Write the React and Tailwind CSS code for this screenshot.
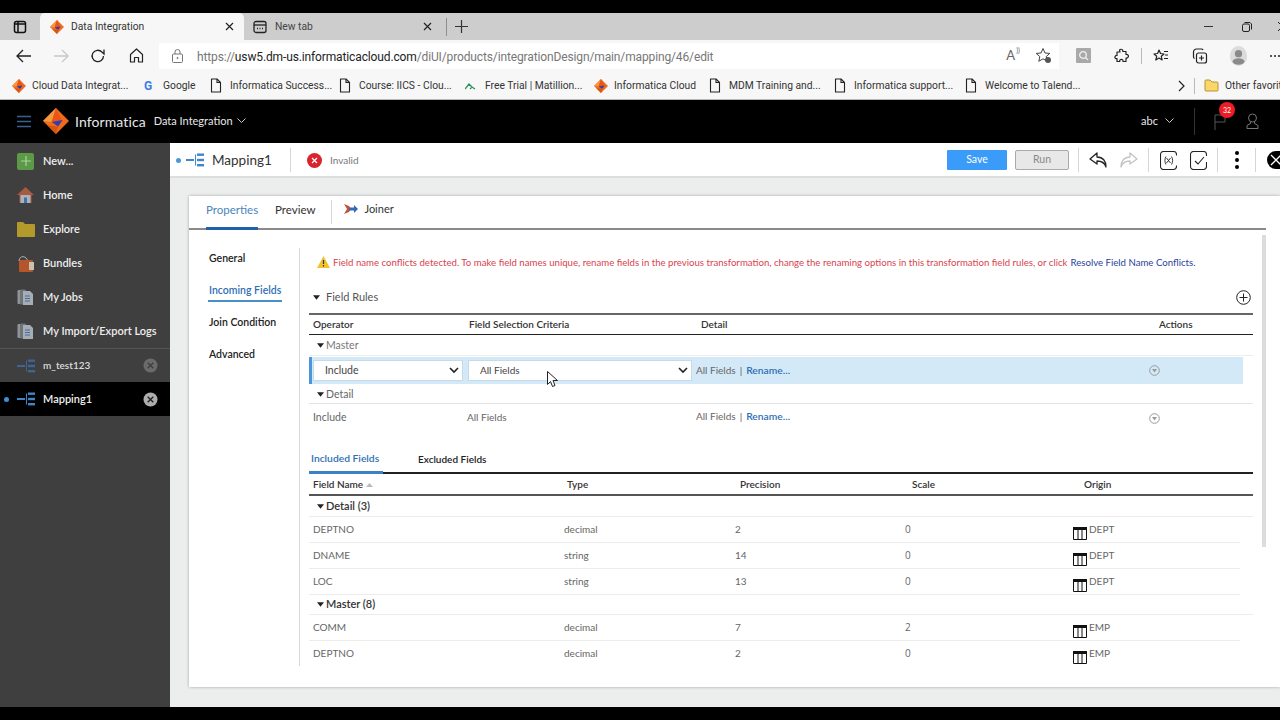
import React from "react";

const Logo = ({ s = 14 }) => (
  <svg width={s} height={s} viewBox="0 0 24 24" className="shrink-0">
    <path d="M12 0 L24 12 L12 24 L0 12Z" fill="#f26a1b" />
    <path d="M12 0 L0 12 L8 13Z" fill="#f59a3a" />
    <path d="M12 0 L18 13 L8 13Z" fill="#e8541a" />
    <path d="M8 13 L18 11 L14 17Z" fill="#2f3fb0" />
    <path d="M12 24 L4 16 L14 17Z" fill="#d9540f" />
  </svg>
);
const FileIco = () => (
  <svg width="12" height="15" viewBox="0 0 12 15" fill="none" stroke="#222" strokeWidth="1.1" className="shrink-0">
    <path d="M1.5 1h5.500l3.500 3.500v9.500h-9z" strokeLinejoin="round" /><path d="M7 1v3.500h3.500" />
  </svg>
);
const Bm = ({ icon, x, children }) => (
  <div className={`flex items-center shrink-0 ${x}`}>
    <div className="w-[20px] flex items-center shrink-0">{icon}</div>
    <span className="text-[10.300px] text-[#333] whitespace-nowrap">{children}</span>
  </div>
);
const MapIco = ({ c = "#3f86c8" }) => (
  <svg width="18" height="14" viewBox="0 0 18 14" className="shrink-0">
    <rect x="0" y="6" width="8" height="2" fill={c} />
    <rect x="11" y="0.5" width="7" height="2.4" fill={c} />
    <rect x="11" y="5.8" width="7" height="2.4" fill={c} />
    <rect x="11" y="11" width="7" height="2.4" fill={c} />
    <path d="M9.500 1.500v11" stroke={c} strokeWidth="1" />
  </svg>
);
const DocsIco = () => (
  <svg width="17" height="17" viewBox="0 0 17 17" className="shrink-0">
    <rect x="0.5" y="1" width="6" height="14" rx="1" fill="#8f9499" />
    <rect x="3" y="0.5" width="6" height="15" rx="1" fill="#6f7479" />
    <path d="M6 2h7l3 3v11H6z" fill="#a7adb3" />
    <path d="M8 7h5M8 9.500h5M8 12h5" stroke="#3f6ea0" strokeWidth="1.2" />
  </svg>
);
const NavItem = ({ icon, label }) => (
  <div className="h-[34px] shrink-0 flex items-center pl-[17px]">
    <div className="w-[26px] flex items-center">{icon}</div>
    <span className="text-[11px] font-semibold text-[#eeeeee] whitespace-nowrap">{label}</span>
  </div>
);
const Circle = ({ active }) => (
  <svg width="15" height="15" viewBox="0 0 15 15" className="shrink-0">
    <circle cx="7.500" cy="7.500" r="7" fill={active ? "#adadad" : "#6b6b6b"} />
    <path d="M4.700 4.700l5.600 5.600M10.300 4.700l-5.600 5.600" stroke={active ? "#222" : "#3f3f3f"} strokeWidth="1.400" />
  </svg>
);
const Sep = ({ x = "" }) => <div className={`w-px h-[24px] bg-[#d6d6d6] shrink-0 ${x}`} />;
const Tri = ({ c = "#222", cls = "" }) => (
  <svg width="7" height="5" viewBox="0 0 8 5" className={`shrink-0 ${cls}`}><path d="M0 0h8L4 5z" fill={c} /></svg>
);
const Chev = () => (
  <svg width="10" height="7" viewBox="0 0 10 7" fill="none" stroke="#222" strokeWidth="1.600" className="shrink-0"><path d="M1 1l4 4 4-4" /></svg>
);
const Action = () => (
  <svg width="11" height="11" viewBox="0 0 11 11" className="shrink-0">
    <circle cx="5.500" cy="5.500" r="4.800" fill="none" stroke="#9a9a9a" />
    <path d="M3 4h5L5.500 7.500z" fill="#9a9a9a" />
  </svg>
);
const TableIco = () => (
  <svg width="14" height="13" viewBox="0 0 14 13" className="shrink-0 mt-[8px]">
    <rect x="0" y="0" width="14" height="3" fill="#111" />
    <path d="M.5 3v9.500h13V3M5 3v9.500M9 3v9.500" fill="none" stroke="#111" />
  </svg>
);
const Rename = () => (
  <>
    <span className="text-[#666]">All Fields</span>
    <span className="text-[#555] mx-[4px]">|</span>
    <span className="text-[#2f6fb5] font-semibold text-[10.300px]">Rename...</span>
  </>
);
const Field = ({ name, type, p, s, o }) => (
  <div className="flex items-center h-[26px] shrink-0 border-b border-[#ececec] w-[931px] text-[10px] text-[#666]">
    <span className="w-[255px] pl-[4px]">{name}</span>
    <span className="w-[171px]">{type}</span>
    <span className="w-[170px]">{p}</span>
    <span className="w-[168px] font-['Open_Sans',sans-serif] text-[#666]">{s}</span>
    <div className="flex items-center gap-[2px]"><TableIco /><span>{o}</span></div>
  </div>
);
const Group = ({ cls = "", children }) => (
  <div className={`flex items-center h-[21px] shrink-0 border-b border-[#ececec] pl-[8px] gap-[2px] text-[11px] font-semibold text-[#333] ${cls}`}>
    <Tri />{children}
  </div>
);

export default function App() {
  return (
    <div className="w-[1280px] h-[720px] overflow-hidden bg-black flex flex-col font-['Lato',sans-serif] antialiased relative">
      <div className="h-[13px] shrink-0 bg-black" />
      {/* tab strip */}
      <div className="h-[27px] shrink-0 bg-[#cdcdcd] flex items-end font-['Roboto',sans-serif]">
        <div className="w-[40px] h-full flex items-center justify-center">
          <svg width="14" height="14" viewBox="0 0 14 14" fill="none" stroke="#111" strokeWidth="1.500"><rect x="1.500" y="1.500" width="11" height="11" rx="2" /><path d="M5 2v10M2 4h10" /></svg>
        </div>
        <div className="w-[204px] h-full bg-[#f7f7f7] rounded-t-[5px] flex items-center pl-[10px] pr-[10px]">
          <Logo />
          <span className="ml-[7px] pt-[1px] text-[10.300px] text-[#333] flex-1">Data Integration</span>
          <svg width="9" height="9" viewBox="0 0 9 9" stroke="#222" strokeWidth="1.200"><path d="M1 1l7 7M8 1l-7 7" /></svg>
        </div>
        <div className="w-[196px] h-full flex items-center pl-[9px] pr-[8px]">
          <svg width="14" height="14" viewBox="0 0 14 14" fill="none" stroke="#222" strokeWidth="1.300"><rect x="1" y="1.500" width="12" height="11" rx="2" /><path d="M1 5h12" /><path d="M4 8.500h1M6.500 8.500h1M9 8.500h1" /></svg>
          <span className="ml-[8px] pt-[1px] text-[10.300px] text-[#444] flex-1">New tab</span>
          <svg width="9" height="9" viewBox="0 0 9 9" stroke="#222" strokeWidth="1.200"><path d="M1 1l7 7M8 1l-7 7" /></svg>
        </div>
        <div className="w-px h-[18px] bg-[#8e8e8e] mb-[4px] ml-[6px]" />
        <div className="h-full flex items-center ml-[8px]">
          <svg width="13" height="13" viewBox="0 0 13 13" stroke="#333" strokeWidth="1.200"><path d="M6.500 0v13M0 6.500h13" /></svg>
        </div>
        <div className="flex-1" />
        <div className="h-full flex items-center">
          <div className="w-[9px] h-px bg-[#333]" />
          <svg width="10" height="10" viewBox="0 0 10 10" fill="none" stroke="#222" className="ml-[29px]"><rect x=".5" y="2" width="7" height="7.500" rx="1.500" /><path d="M2.500.5h5.500l1.500 1.500v5.500" /></svg>
          <svg width="9" height="9" viewBox="0 0 9 9" stroke="#222" className="ml-[26px] -mr-[7px]"><path d="M0 0l9 9M9 0L0 9" /></svg>
        </div>
      </div>
      {/* address bar */}
      <div className="h-[31px] shrink-0 bg-[#f7f7f7] flex items-center">
        <div className="w-[160px] flex items-center pl-[16px]">
          <svg width="16" height="14" viewBox="0 0 16 14" fill="none" stroke="#222" strokeWidth="1.300"><path d="M15 7H1M7 1L1 7l6 6" /></svg>
          <svg width="16" height="14" viewBox="0 0 16 14" fill="none" stroke="#c8c8c8" strokeWidth="1.300" className="ml-[21px]"><path d="M1 7h14M9 1l6 6-6 6" /></svg>
          <svg width="16" height="16" viewBox="0 0 16 16" fill="none" stroke="#222" strokeWidth="1.300" className="ml-[21px]"><path d="M13.500 8a5.700 5.700 0 1 1-1.600-4L14 6V1.500" /></svg>
          <svg width="15" height="15" viewBox="0 0 15 15" fill="none" stroke="#222" strokeWidth="1.200" className="ml-[23px]"><path d="M7.500 1L1.500 6.500V14h4V9.500h4V14h4V6.500z" strokeLinejoin="round" /></svg>
        </div>
        <div className="w-[900px] h-[26px] bg-white flex items-center pl-[13px] shrink-0">
          <svg width="11" height="14" viewBox="0 0 11 14" fill="none" stroke="#777"><rect x=".5" y="5" width="10" height="8.500" rx="1" /><path d="M3 5V3a2.500 2.500 0 0 1 5 0v2" /><circle cx="5.500" cy="9" r=".6" fill="#777" /></svg>
          <div className="ml-[14px] pt-[2px] text-[12px] tracking-[-0.13px] whitespace-nowrap text-[#777] flex-1 font-['Roboto',sans-serif]">
            https://<span className="text-[#222]">usw5.dm-us.informaticacloud.com</span>/diUI/products/integrationDesign/main/mapping/46/edit
          </div>
          <span className="text-[13px] text-[#666] mr-[20px] relative">A<span className="text-[7px] absolute -top-[1px] -right-[5px]">))</span></span>
          <svg width="17" height="17" viewBox="0 0 17 17" fill="none" stroke="#444" className="mr-[7px]"><path d="M8 1.500l2 4.500 4.800.4-3.600 3.200 1 4.700-4.200-2.500-4.200 2.500 1-4.700L1.200 6.400 6 6z" strokeLinejoin="round" /><circle cx="13" cy="13" r="3" fill="#555" stroke="none" /></svg>
        </div>
        <div className="flex items-center pl-[17px]">
          <div className="w-[15px] h-[15px] bg-[#a9a9a9] rounded-[1px] flex items-center justify-center">
            <svg width="11" height="11" viewBox="0 0 11 11" fill="none" stroke="#eee" strokeWidth="1.300"><circle cx="5" cy="5" r="3.300" /><path d="M7.500 7.500L10 10" /></svg>
          </div>
          <svg width="16" height="16" viewBox="0 0 16 16" fill="none" stroke="#222" strokeWidth="1.200" className="ml-[23px]"><path d="M6 1.500c2-.8 3 .5 2.800 2h3.200v3c1.800-.3 3 1 2.200 2.600-.5 1-1.500 1.200-2.200 1v3.400H9c.2-1.600-.6-2.200-1.600-2.200s-2 .7-1.600 2.200H3v-3C1 11 .5 9.500 1.200 8.300 1.800 7.500 2.400 7.300 3 7.500V4h3c-.4-1-.6-1.900 0-2.500z" strokeLinejoin="round" /></svg>
          <div className="w-px h-[16px] bg-[#bbb] ml-[11px]" />
          <svg width="16" height="16" viewBox="0 0 16 16" fill="none" stroke="#222" strokeWidth="1.200" className="ml-[11px]"><path d="M6 2l1.500 3.500L11 6 8.300 8.300l.8 3.700L6 10l-3.200 2 .9-3.700L1 6l3.600-.5zM11 3.500h4M12 7h3M11 10.500h4" strokeLinejoin="round" /></svg>
          <svg width="16" height="16" viewBox="0 0 16 16" fill="none" stroke="#222" strokeWidth="1.200" className="ml-[23px]"><rect x="4.500" y="5" width="10" height="10" rx="2" /><path d="M9.500 7.500v5M7 10h5M2.500 10.500A2 2 0 0 1 1.500 9V4a3 3 0 0 1 3-3h5a2 2 0 0 1 1.600 1" /></svg>
          <svg width="19" height="20" viewBox="0 0 20 22" className="ml-[21px]"><ellipse cx="10" cy="11" rx="9.500" ry="11" fill="#dcdcdc" /><circle cx="10" cy="8.500" r="4" fill="#8a8a8a" /><ellipse cx="10" cy="17" rx="6.500" ry="3.500" fill="#8a8a8a" /></svg>
          <div className="flex gap-[2px] ml-[22px]"><i className="w-[2px] h-[2px] bg-[#222] rounded-full" /><i className="w-[2px] h-[2px] bg-[#222] rounded-full" /><i className="w-[2px] h-[2px] bg-[#222] rounded-full" /></div>
        </div>
      </div>
      {/* bookmarks */}
      <div className="h-[29px] shrink-0 bg-[#f7f7f7] border-b border-[#b5b5b5] flex items-center pl-[12px] pt-[1px] font-['Roboto',sans-serif] overflow-hidden">
        <Bm icon={<Logo />} x="w-[131px]">Cloud Data Integrat...</Bm>
        <Bm icon={<span className="text-[12px] font-bold text-[#3b7de8] pl-[1px]">G</span>} x="w-[67px]">Google</Bm>
        <Bm icon={<FileIco />} x="w-[129px]">Informatica Success...</Bm>
        <Bm icon={<FileIco />} x="w-[126px]">Course: IICS - Clou...</Bm>
        <Bm icon={<svg width="11" height="8" viewBox="0 0 11 8" fill="none" stroke="#2f8f5b" strokeWidth="1.300"><path d="M0 7l4-5 3 3M5 7l2-2 3 2" /></svg>} x="w-[129px]">Free Trial | Matillion...</Bm>
        <Bm icon={<Logo />} x="w-[115px]">Informatica Cloud</Bm>
        <Bm icon={<FileIco />} x="w-[125px]">MDM Training and...</Bm>
        <Bm icon={<FileIco />} x="w-[131px]">Informatica support...</Bm>
        <Bm icon={<FileIco />} x="w-[213px]">Welcome to Talend...</Bm>
        <svg width="7" height="12" viewBox="0 0 7 12" fill="none" stroke="#222" strokeWidth="1.200" className="shrink-0"><path d="M1 1l5 5-5 5" /></svg>
        <div className="w-px h-[16px] bg-[#bbb] ml-[9px] mr-[9px] shrink-0" />
        <svg width="15" height="13" viewBox="0 0 15 13" className="shrink-0 mr-[6px]"><path d="M1 2a1 1 0 0 1 1-1h4l2 2h5a1 1 0 0 1 1 1v7a1 1 0 0 1-1 1H2a1 1 0 0 1-1-1z" fill="#fbd76a" stroke="#b8923a" /></svg>
        <span className="text-[10.300px] text-[#333] whitespace-nowrap">Other favorites</span>
      </div>
      {/* app header */}
      <div className="h-[43px] shrink-0 bg-black flex items-center pl-[17px] pb-[1px] text-[#e8e8e8]">
        <svg width="14" height="13" viewBox="0 0 14 13" stroke="#3d5f8f" strokeWidth="1.600"><path d="M0 1.500h14M0 6.500h14M0 11.500h14" /></svg>
        <div className="ml-[12px]"><Logo s={26} /></div>
        <span className="ml-[6px] text-[14px] tracking-[0.1px]">Informatica</span>
        <span className="ml-[8px] text-[11px]">Data Integration</span>
        <svg width="9" height="6" viewBox="0 0 9 6" fill="none" stroke="#ccc" className="ml-[4px]"><path d="M.5.5l4 4 4-4" /></svg>
        <div className="flex-1" />
        <span className="text-[11px]">abc</span>
        <svg width="9" height="6" viewBox="0 0 9 6" fill="none" stroke="#ccc" className="ml-[7px]"><path d="M.5.5l4 4 4-4" /></svg>
        <div className="w-px h-[27px] bg-[#333] ml-[20px]" />
        <div className="relative ml-[19px]">
          <svg width="12" height="18" viewBox="0 0 12 18" fill="none" stroke="#555"><path d="M1 18V3h10v7H1" /></svg>
          <div className="absolute -top-[10px] left-[5px] w-[16px] h-[16px] rounded-full bg-[#ee1c25] flex items-center justify-center text-[7px] text-white">32</div>
        </div>
        <svg width="13" height="16" viewBox="0 0 13 16" fill="none" stroke="#777" className="ml-[20px] mr-[21px]"><circle cx="6.500" cy="5" r="4" /><path d="M4.500 9v1.500L1 12.500V15.500h11v-3L8.500 10.500V9" /></svg>
      </div>
      {/* body */}
      <div className="h-[564px] shrink-0 flex">
        {/* sidebar */}
        <div className="w-[170px] shrink-0 bg-[#3f3f40] flex flex-col pt-[1px]">
          <NavItem label="New..." icon={<div className="w-[17px] h-[17px] rounded-[2px] bg-[#5c9a48] flex items-center justify-center"><svg width="10" height="10" viewBox="0 0 10 10" stroke="#a9d49a" strokeWidth="1.200"><path d="M5 0v10M0 5h10" /></svg></div>} />
          <NavItem label="Home" icon={<svg width="17" height="16" viewBox="0 0 17 16"><path d="M8.500 0L17 8h-2.500v8h-12V8H0z" fill="#a85a40" /><rect x="3.500" y="8" width="10" height="8" fill="#aab2bc" /><rect x="7" y="10.500" width="3" height="5.500" fill="#4170a8" /></svg>} />
          <NavItem label="Explore" icon={<svg width="18" height="15" viewBox="0 0 18 15"><path d="M0 1a1 1 0 0 1 1-1h5l2 2h9a1 1 0 0 1 1 1v11a1 1 0 0 1-1 1H1a1 1 0 0 1-1-1z" fill="#b49a2a" /></svg>} />
          <NavItem label="Bundles" icon={<svg width="18" height="17" viewBox="0 0 18 17"><rect x="2" y="5" width="14" height="12" rx="1" fill="#b5552a" /><rect x="12" y="7" width="5" height="8" fill="#c9c2b0" /><path d="M2 6a4 4 0 0 1 7-3l1.500 2" fill="none" stroke="#b0b0b0" /></svg>} />
          <NavItem label="My Jobs" icon={<DocsIco />} />
          <NavItem label="My Import/Export Logs" icon={<DocsIco />} />
          <div className="h-[34px] shrink-0 border-t border-[#555] flex items-center pl-[17px] pr-[12px]">
            <div className="w-[26px]"><MapIco c="#3d6595" /></div>
            <span className="flex-1 text-[10px] font-semibold text-[#dcdcdc]">m_test123</span>
            <Circle />
          </div>
          <div className="h-[34px] shrink-0 bg-black flex items-center pl-[4px] pr-[12px]">
            <div className="w-[5px] h-[5px] rounded-full bg-[#3f8fd8] mr-[8px]" />
            <div className="w-[26px]"><MapIco /></div>
            <span className="flex-1 text-[11px] font-semibold text-[#eeeeee]">Mapping1</span>
            <Circle active />
          </div>
        </div>
        {/* main */}
        <div className="flex-1 min-w-0 flex flex-col bg-[#eceeee]">
          <div className="h-[35px] shrink-0 bg-white border-b-2 border-[#dedede] flex items-center pl-[6px] pt-[1px]">
            <div className="w-[5px] h-[5px] rounded-full bg-[#4a98d8] mr-[5px]" />
            <MapIco />
            <span className="ml-[8px] text-[13.500px] text-[#333] w-[78px]">Mapping1</span>
            <Sep />
            <svg width="15" height="15" viewBox="0 0 15 15" className="ml-[16px]"><circle cx="7.500" cy="7.500" r="7.500" fill="#d9232e" /><path d="M5 5l5 5M10 5l-5 5" stroke="#fff" strokeWidth="1.200" /></svg>
            <span className="ml-[8px] text-[10px] text-[#777]">Invalid</span>
            <div className="flex-1" />
            <div className="w-[60px] h-[20px] bg-[#3a9bf8] rounded-[1px] flex items-center justify-center text-[10.500px] text-white">Save</div>
            <div className="ml-[8px] w-[54px] h-[20px] bg-[#e8e8e8] border border-[#aaa] rounded-[2px] flex items-center justify-center text-[10.500px] text-[#888]">Run</div>
            <Sep x="ml-[9px]" />
            <svg width="19" height="16" viewBox="0 0 19 16" fill="none" stroke="#222" strokeWidth="1.300" className="ml-[10px]"><path d="M8 1L1 7l7 5V9c4.500 0 7.500 1.500 9 6 0-6-3-10-9-10z" strokeLinejoin="round" /></svg>
            <svg width="19" height="16" viewBox="0 0 19 16" fill="none" stroke="#c4c4c4" strokeWidth="1.300" className="ml-[11px]"><path d="M11 1l7 6-7 5V9c-4.500 0-7.500 1.500-9 6 0-6 3-10 9-10z" strokeLinejoin="round" /></svg>
            <Sep x="ml-[10px]" />
            <svg width="17" height="19" viewBox="0 0 17 19" fill="none" stroke="#222" strokeWidth="1.100" className="ml-[11px]"><path d="M16.500 4.500V3.500a3 3 0 0 0-3-3h-10a3 3 0 0 0-3 3v12a3 3 0 0 0 3 3h10a3 3 0 0 0 3-3v-1" /><path d="M6 5.500c-1.500 2.500-1.500 5.500 0 8M11.500 5.500c1.500 2.500 1.500 5.500 0 8M6.500 7l4 5M10.500 7l-4 5" strokeWidth=".9" /></svg>
            <svg width="17" height="19" viewBox="0 0 17 19" fill="none" stroke="#222" strokeWidth="1.100" className="ml-[13px]"><path d="M16.500 5V3.500a3 3 0 0 0-3-3h-10a3 3 0 0 0-3 3v12a3 3 0 0 0 3 3h10a3 3 0 0 0 3-3V11" /><path d="M5 10l3 3 6-7" /></svg>
            <Sep x="ml-[10px]" />
            <div className="flex flex-col gap-[3px] ml-[17px]"><i className="w-[4px] h-[4px] rounded-full bg-black" /><i className="w-[4px] h-[4px] rounded-full bg-black" /><i className="w-[4px] h-[4px] rounded-full bg-black" /></div>
            <Sep x="ml-[16px]" />
            <div className="ml-[11px] w-[13px] h-[18px] rounded-l-full bg-black overflow-hidden flex items-center pl-[3px] shrink-0">
              <svg width="12" height="12" viewBox="0 0 12 12" stroke="#fff" strokeWidth="1.300" className="shrink-0"><path d="M1 1l10 10M11 1L1 11" /></svg>
            </div>
          </div>
          {/* card */}
          <div className="ml-[19px] mt-[18px] h-[491px] bg-white shadow-[0_0_3px_rgba(0,0,0,0.3)] flex flex-col relative">
            {/* tabs */}
            <div className="h-[34px] shrink-0 mr-[14px] border-b-2 border-[#8a8a8a] flex items-start pl-[17px]">
              <div className="h-[34px] w-[52px] border-b-[3px] border-[#1f62a8] flex items-start pt-[5px]">
                <span className="text-[11.500px] text-[#4a86bb]">Properties</span>
              </div>
              <span className="ml-[17px] pt-[5px] text-[11.500px] text-[#333]">Preview</span>
              <div className="ml-[16px] mt-[4px] w-px h-[24px] bg-[#d6d6d6]" />
              <div className="ml-[12px] pt-[5px] flex items-center gap-[6px]">
                <svg width="14" height="12" viewBox="0 0 14 12"><path d="M0 1l5 2 2 3-2 3-5 2 3-5z" fill="#c4562d" /><path d="M5 4.500h5V2l4 4-4 4V7.500H5z" fill="#3569b8" /></svg>
                <span className="text-[11px] text-[#333]">Joiner</span>
              </div>
            </div>
            {/* scrollbar */}
            <div className="absolute right-[14px] top-[39px] w-[4px] h-[312px] bg-[#dcdcdc]" />
            <div className="flex-1 min-h-0 flex overflow-hidden">
              {/* side tabs */}
              <div className="w-[110px] shrink-0 pl-[20px] pt-[18px] flex flex-col text-[10.500px] font-semibold text-[#222]">
                <div className="h-[32px] leading-[20px]">General</div>
                <div className="h-[32px] leading-[20px]"><span className="inline-block w-[74px] -ml-[1px] pl-[1px] text-[#2f6fb5] leading-[18px] border-b-[2px] border-[#4a90c8] pb-[1px] whitespace-nowrap">Incoming Fields</span></div>
                <div className="h-[32px] leading-[20px]">Join Condition</div>
                <div className="h-[32px] leading-[20px]">Advanced</div>
              </div>
              <div className="w-px bg-[#d9d9d9] mt-[18px] shrink-0" />
              <div className="w-[944px] ml-[9px] shrink-0 flex flex-col">
                {/* warning */}
                <div className="h-[26px] shrink-0 mt-[19px] flex items-center pl-[8px] whitespace-nowrap text-[9.650px]">
                  <svg width="13" height="12" viewBox="0 0 13 12" className="shrink-0"><path d="M6.500 0L13 12H0z" fill="#f2c230" /><path d="M6.500 4v4M6.500 9v1.500" stroke="#333" strokeWidth="1.200" /></svg>
                  <span className="ml-[3px] text-[#d8434f]">Field name conflicts detected. To make field names unique, rename fields in the previous transformation, change the renaming options in this transformation field rules, or click</span>
                  <span className="ml-[3px] text-[#2a3f9a]">Resolve Field Name Conflicts.</span>
                </div>
                {/* field rules */}
                <div className="h-[31px] shrink-0 mt-[9px] flex items-center pl-[4px] pb-[2px] border-b-2 border-[#666]">
                  <Tri />
                  <span className="ml-[6px] text-[11px] text-[#555]">Field Rules</span>
                  <div className="flex-1" />
                  <svg width="15" height="15" viewBox="0 0 15 15" fill="none" stroke="#222" className="mr-[2px]"><circle cx="7.500" cy="7.500" r="6.800" /><path d="M7.500 3.500v8M3.500 7.500h8" /></svg>
                </div>
                <div className="h-[20px] pb-[1px] flex items-center border-b border-[#222] text-[10px] font-semibold text-[#333] shrink-0">
                  <span className="w-[160px] pl-[4px]">Operator</span>
                  <span className="w-[232px]">Field Selection Criteria</span>
                  <span className="w-[458px]">Detail</span>
                  <span>Actions</span>
                </div>
                <div className="h-[21px] pt-[1px] flex items-center border-b border-[#eeeeee] pl-[8px] gap-[2px] text-[10.500px] text-[#777] shrink-0"><Tri />Master</div>
                {/* selected row */}
                <div className="h-[27px] mt-[1px] w-[934px] bg-[#d3e9f7] border-l-[3px] border-[#4a97dc] flex items-center text-[10px] shrink-0">
                  <div className="w-[150px] ml-[1px] h-[21px] bg-white border border-[#c6dbe8] flex items-center pl-[11px] pr-[3px] text-[#444] text-[10.500px]"><span className="flex-1">Include</span><Chev /></div>
                  <div className="w-[224px] ml-[5px] h-[21px] bg-white border border-[#c6dbe8] flex items-center pl-[11px] pr-[3px] text-[#444]"><span className="flex-1">All Fields</span><Chev /></div>
                  <div className="ml-[4px] w-[453px] whitespace-nowrap"><Rename /></div>
                  <Action />
                </div>
                <div className="h-[20px] pt-[2px] flex items-center border-b border-[#e4e4e4] pl-[8px] gap-[2px] text-[10.500px] text-[#666] shrink-0"><Tri />Detail</div>
                <div className="h-[26px] flex items-center text-[10px] text-[#666] shrink-0">
                  <span className="w-[158px] pl-[4px] pt-[1px] text-[10.500px]">Include</span>
                  <span className="w-[229px]">All Fields</span>
                  <div className="w-[453px] whitespace-nowrap"><Rename /></div>
                  <span className="mt-[3px]"><Action /></span>
                </div>
                {/* sub tabs */}
                <div className="h-[33px] mt-[11px] flex items-end border-b-2 border-[#222] shrink-0 text-[10px] font-semibold">
                  <div className="w-[74px] h-[33px] -mb-[2px] border-b-[3px] border-[#3a82c4] text-[#2f6fb5] text-[10.300px] flex items-center pl-[2px] pt-[6px] whitespace-nowrap">Included Fields</div>
                  <div className="h-[33px] ml-[35px] text-[#222] flex items-center pt-[8px] whitespace-nowrap">Excluded Fields</div>
                </div>
                <div className="h-[22px] pt-[1px] flex items-center border-b-2 border-[#555] text-[10px] font-semibold text-[#333] shrink-0">
                  <span className="w-[258px] pl-[4px] flex items-center gap-[3px]">Field Name<svg width="7" height="4" viewBox="0 0 7 4"><path d="M0 4h7L3.500 0z" fill="#bbb" /></svg></span>
                  <span className="w-[173px]">Type</span>
                  <span className="w-[172px]">Precision</span>
                  <span className="w-[172px]">Scale</span>
                  <span>Origin</span>
                </div>
                <Group>Detail (3)</Group>
                <Field name="DEPTNO" type="decimal" p="2" s="0" o="DEPT" />
                <Field name="DNAME" type="string" p="14" s="0" o="DEPT" />
                <Field name="LOC" type="string" p="13" s="0" o="DEPT" />
                <Group cls="-mt-[1px]">Master (8)</Group>
                <Field name="COMM" type="decimal" p="7" s="2" o="EMP" />
                <Field name="DEPTNO" type="decimal" p="2" s="0" o="EMP" />
              </div>
            </div>
            <div className="h-[21px] shrink-0" />
          </div>
          <div className="flex-1" />
        </div>
      </div>
      {/* mouse cursor */}
      <svg width="11" height="17" viewBox="0 0 11 17" className="absolute left-[547px] top-[371px]"><path d="M.5.5v13l3-3 2 5 2.500-1-2-5h4.500z" fill="#fff" stroke="#222" strokeWidth="1" strokeLinejoin="round" /></svg>
    </div>
  );
}
